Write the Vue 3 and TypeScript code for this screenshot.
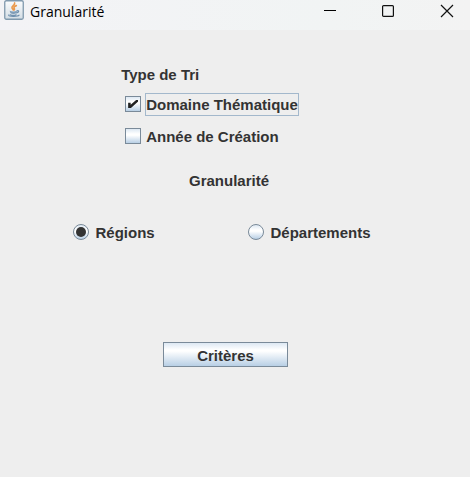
<script setup lang="ts">
import { ref } from 'vue'

type Scope = 'regions' | 'departements'

const byTheme = ref<boolean>(true)
const byYear = ref<boolean>(false)
const scope = ref<Scope>('regions')
</script>

<template>
  <div class="window">
    <header class="titlebar">
      <svg class="app-icon" width="20" height="20" viewBox="0 0 20 20" aria-hidden="true">
        <defs>
          <linearGradient id="tile" x1="0" y1="0" x2="0" y2="1">
            <stop offset="0" stop-color="#fbfcfd" />
            <stop offset="1" stop-color="#d3dde5" />
          </linearGradient>
        </defs>
        <rect x="0.75" y="0.75" width="18.5" height="18.5" rx="1.5" fill="url(#tile)" stroke="#8099ad" stroke-width="1.3" />
        <path d="M10.6 3c.8 2-3.4 3.1-2.6 4.8.3.9 1.2 1.4 1.4 2.2M12.3 5.6c-1.800.7-2.8 1.600-2.1 2.600.5.7.4 1.200-.3 1.800" fill="none" stroke="#ea9a4e" stroke-width="1.7" stroke-linecap="round" />
        <path d="M5.600 10.800c2.200.9 5.600.8 7.400 0l-.7 2.500c-1.500.8-4.300.8-5.800 0z" fill="#7f9db8" />
        <path d="M13 10.800c2.400-.7 2.200 1.500-.4 2M4.800 15c-1 1.700 8.900 2 10.300.2M6.300 14.800c1.800.7 4.200.7 5.800 0" fill="none" stroke="#6f90ae" stroke-width="1.200" stroke-linecap="round" />
      </svg>
      <h1 class="title">Granularité</h1>
      <div class="controls">
        <button type="button" class="control" aria-label="Réduire">
          <svg width="14" height="14" viewBox="0 0 14 14"><path d="M1 6.5h12" stroke="#000" fill="none" /></svg>
        </button>
        <button type="button" class="control" aria-label="Agrandir">
          <svg width="14" height="14" viewBox="0 0 14 14"><rect x="1.6" y="1.6" width="10.8" height="10.8" rx="1" stroke="#111" stroke-width="1.2" fill="none" /></svg>
        </button>
        <button type="button" class="control" aria-label="Fermer">
          <svg width="14" height="14" viewBox="0 0 14 14"><path d="M1 1l12 12M13 1L1 13" stroke="#111" stroke-width="1.2" fill="none" /></svg>
        </button>
      </div>
    </header>

    <form class="form" @submit.prevent>
      <fieldset class="sort">
        <legend class="heading">Type de Tri</legend>
        <label class="option">
          <input v-model="byTheme" class="box" type="checkbox" />
          <span class="caption focused">Domaine Thématique</span>
        </label>
        <label class="option">
          <input v-model="byYear" class="box" type="checkbox" />
          <span class="caption">Année de Création</span>
        </label>
      </fieldset>

      <fieldset class="scope">
        <legend class="heading centered">Granularité</legend>
        <div class="choices">
          <label class="choice">
            <input v-model="scope" class="dot" type="radio" name="scope" value="regions" />
            <span class="choice-text">Régions</span>
          </label>
          <label class="choice">
            <input v-model="scope" class="dot" type="radio" name="scope" value="departements" />
            <span class="choice-text">Départements</span>
          </label>
        </div>
      </fieldset>

      <button type="submit" class="submit">Critères</button>
    </form>
  </div>
</template>

<style>
body {
  background: #eeeeee;
}
</style>

<style scoped>
.window {
  min-height: 100vh;
  background: #eeeeee;
  color: #333333;
  font: bold 15px/20px "Liberation Sans", Arial, sans-serif;
}

.titlebar {
  display: flex;
  align-items: flex-start;
  height: 30px;
  padding-left: 4px;
  box-sizing: border-box;
  background: linear-gradient(90deg, #f3f3f6, #f1f4f4 70%, #f3f3f3);
}

.app-icon {
  flex: none;
}

.title {
  margin: 2px 0 0 6px;
  color: #000;
  font: 14px/20px "Open Sans", "Segoe UI", sans-serif;
}

.controls {
  display: flex;
  margin-left: auto;
}

.control {
  display: flex;
  align-items: flex-start;
  justify-content: center;
  width: 58px;
  height: 30px;
  padding: 4px 0 0;
  border: 0;
  background: none;
}

.control:last-child {
  width: 46px;
  margin-left: 7px;
}

.form {
  display: flex;
  flex-direction: column;
  padding-top: 35px;
}

fieldset {
  min-width: 0;
  margin: 0;
  padding: 0;
  border: 0;
}

legend {
  padding: 0;
}

.sort {
  align-self: center;
  display: flex;
  flex-direction: column;
  gap: 10px;
  margin-right: 50px;
}

.heading {
  height: 28px;
}

.option {
  display: flex;
  align-items: center;
  gap: 4px;
  height: 22px;
  padding-left: 4px;
}

.caption {
  padding: 1px 0 0;
  border: 1px solid transparent;
}

.caption.focused {
  border-color: #a3b8cc;
}

.box,
.dot {
  appearance: none;
  flex: none;
  display: grid;
  place-items: center;
  width: 16px;
  height: 16px;
  margin: 0;
  box-sizing: border-box;
  border: 1px solid #7a8a99;
  outline: 0;
  background: linear-gradient(#dde8f3, #ffffff 35%, #ffffff 45%, #b8cfe5);
}

.box:checked::before {
  content: "";
  width: 10px;
  height: 8px;
  background: #222;
  clip-path: polygon(0 35%, 25% 35%, 25% 60%, 80% 0, 100% 0, 100% 20%, 28% 100%, 0 100%);
}

.dot {
  border-radius: 50%;
}

.dot:checked::before {
  content: "";
  width: 10px;
  height: 10px;
  border-radius: 50%;
  background: #333333;
}

.scope {
  margin-top: 24px;
}

.centered {
  margin: 0 auto;
  padding-right: 12px;
}

.choices {
  display: grid;
  grid-template-columns: 175px auto;
  justify-content: center;
  margin-top: 22px;
  margin-right: 26px;
}

.choice {
  display: flex;
  align-items: center;
  gap: 6px;
}

.choice-text {
  padding-top: 2px;
}

.submit {
  align-self: center;
  width: 125px;
  height: 25px;
  margin-top: 99px;
  margin-right: 19px;
  padding: 2px 0 0;
  border: 1px solid #7a8a99;
  background: linear-gradient(#dde8f3, #ffffff 30%, #ffffff 35%, #b8cfe5);
  color: inherit;
  font: inherit;
}
</style>
